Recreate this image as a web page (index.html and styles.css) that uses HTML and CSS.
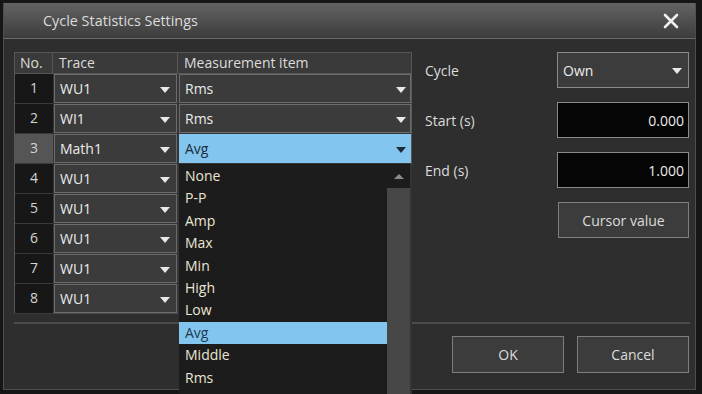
FILE: index.html
```html
<!DOCTYPE html>
<html>
<head>
<meta charset="utf-8">
<link rel="stylesheet" href="styles.css">
</head>
<body>
<div class="dialog">
  <div class="titlebar">
    <span class="title">Cycle Statistics Settings</span>
    <svg class="close" width="16" height="16" viewBox="0 0 16 16"><path d="M2 2 L14 14 M14 2 L2 14" stroke="#f0f0f0" stroke-width="2.6" stroke-linecap="round"/></svg>
  </div>
  <div class="content">
    <div class="main">
      <div class="table">
        <div class="hcell c-no">No.</div>
        <div class="hcell">Trace</div>
        <div class="hcell last">Measurement item</div>

        <div class="no">1</div>
        <div class="sel"><span>WU1</span><i class="arr"></i></div>
        <div class="sel wide"><span>Rms</span><i class="arr"></i></div>

        <div class="no">2</div>
        <div class="sel"><span>WI1</span><i class="arr"></i></div>
        <div class="sel wide"><span>Rms</span><i class="arr"></i></div>

        <div class="no cur">3</div>
        <div class="sel"><span>Math1</span><i class="arr"></i></div>
        <div class="sel wide open"><span>Avg</span><i class="arr dark"></i>
          <div class="list">
            <div class="items">
              <div class="item">None</div>
              <div class="item">P-P</div>
              <div class="item">Amp</div>
              <div class="item">Max</div>
              <div class="item">Min</div>
              <div class="item">High</div>
              <div class="item">Low</div>
              <div class="item hi">Avg</div>
              <div class="item">Middle</div>
              <div class="item">Rms</div>
            </div>
            <div class="scroll">
              <div class="up"><i class="uparr"></i></div>
              <div class="thumb"></div>
            </div>
          </div>
        </div>

        <div class="no">4</div>
        <div class="sel"><span>WU1</span><i class="arr"></i></div>
        <div class="empty"></div>

        <div class="no">5</div>
        <div class="sel"><span>WU1</span><i class="arr"></i></div>
        <div class="empty"></div>

        <div class="no">6</div>
        <div class="sel"><span>WU1</span><i class="arr"></i></div>
        <div class="empty"></div>

        <div class="no">7</div>
        <div class="sel"><span>WU1</span><i class="arr"></i></div>
        <div class="empty"></div>

        <div class="no">8</div>
        <div class="sel"><span>WU1</span><i class="arr"></i></div>
        <div class="empty"></div>
      </div>
      <div class="side">
        <div class="frow"><span class="lbl">Cycle</span><div class="combo"><span>Own</span><i class="arr"></i></div></div>
        <div class="frow"><span class="lbl">Start (s)</span><div class="num">0.000</div></div>
        <div class="frow"><span class="lbl">End (s)</span><div class="num">1.000</div></div>
        <div class="frow"><span class="lbl"></span><div class="btn">Cursor value</div></div>
      </div>
    </div>
    <div class="sep"></div>
    <div class="footer">
      <div class="btn fb">OK</div>
      <div class="btn fb">Cancel</div>
    </div>
  </div>
</div>
</body>
</html>
```
FILE: styles.css
```css
* { box-sizing: border-box; }
html, body { margin: 0; padding: 0; }
body {
  width: 702px; height: 394px; overflow: hidden;
  background: #161616;
  font-family: "Open Sans", "Noto Sans", sans-serif;
  font-size: 14px;
  color: #dedede;
}
.dialog {
  margin: 3px 0 0 3px;
  width: 693px; height: 387px;
  background: #2e2e2e;
  border: 1px solid #4e4e4e;
  border-top: none;
  display: flex; flex-direction: column;
}
.titlebar {
  height: 36px;
  background: linear-gradient(#636363, #3c3c3c);
  border-bottom: 1px solid #6c6c6c;
  display: flex; align-items: center; justify-content: space-between;
  padding: 0 16px 0 39px;
}
.title { font-size: 14.4px; color: #dcdcdc; padding-bottom: 1px; }
.close { margin-top: 1px; }
.content { flex: 1; padding: 13px 6px 0 10px; display: flex; flex-direction: column; }
.main { display: flex; height: 262px; }
.table {
  width: 398px; height: 262px;
  display: grid;
  grid-template-columns: 38px 125px 233px;
  grid-template-rows: 21px repeat(8, 30px);
  border: 1px solid #575757;
  border-bottom: 2px solid #484848;
  background: #363636;
}
.hcell {
  background: #3a3a3a;
  border-right: 1px solid #575757;
  border-bottom: 1px solid #575757;
  padding-left: 6px;
  line-height: 19px;
  color: #dcdcdc;
}
.hcell.c-no { padding-left: 5px; }
.hcell.last { border-right: none; }
.no {
  background: #171717;
  border-bottom: 1px solid #3a3a3a;
  text-align: center;
  line-height: 28px;
  color: #d4d4d4;
}
.no.cur { background: #555555; }
.sel {
  position: relative;
  margin: 0 1px 1px 1px;
  height: 29px;
  border: 1px solid #6c6c6c;
  background: #3b3b3b;
  display: flex; align-items: center; justify-content: space-between;
  padding: 0 6px 0 5px;
  color: #ececec;
}
.sel.wide { margin-left: 1px; margin-right: 0; padding-right: 4px; }
.sel.open { background: #82c5ef; border-color: #82c5ef; color: #1b2a38; }
.empty { background: #363636; }
.arr {
  display: block; width: 0; height: 0;
  border-left: 5px solid transparent;
  border-right: 5px solid transparent;
  border-top: 6px solid #e8e8e8;
  margin-top: 2px;
}
.arr.dark { border-top-color: #1e2a36; }
.list {
  position: absolute;
  left: -1px; top: 29px;
  width: 233px; height: 240px;
  background: #1c1c1c;
  display: flex;
  z-index: 5;
}
.items { width: 208px; padding-top: 1px; }
.item {
  height: 22.4px; line-height: 22px;
  padding-left: 6px;
  color: #ebe5d4;
}
.item.hi { background: #82c5ef; color: #1e3a52; }
.scroll { width: 25px; display: flex; flex-direction: column; border-right: 2px solid #333; }
.up { height: 24px; display: flex; justify-content: center; align-items: center; }
.uparr {
  display: block; width: 0; height: 0;
  border-left: 5px solid transparent;
  border-right: 5px solid transparent;
  border-bottom: 5px solid #8a8a8a;
}
.thumb { flex: 1; background: #474747; }
.side { flex: 1; padding-left: 13px; display: flex; flex-direction: column; gap: 14px; }
.frow { display: flex; align-items: center; justify-content: space-between; height: 36px; }
.lbl { color: #dcdcdc; }
.combo {
  width: 132px; height: 36px;
  border: 1px solid #8a8a8a;
  background: #3c3c3c;
  display: flex; align-items: center; justify-content: space-between;
  padding: 0 6px 0 5px;
  color: #ececec;
}
.num {
  width: 132px; height: 36px;
  border: 1px solid #8a8a8a;
  background: #050505;
  display: flex; align-items: center; justify-content: flex-end;
  padding-right: 4px;
  color: #ececec;
}
.btn {
  width: 131px; height: 36px;
  border: 1px solid #7e7e7e;
  background: #3c3c3c;
  display: flex; align-items: center; justify-content: center;
  color: #dcdcdc;
}
.sep { height: 2px; background: #4c4c4c; margin: 8px 0 0 0; width: 676px; }
.footer { display: flex; justify-content: flex-end; gap: 13px; padding: 12px 1px 0 0; width: 676px; }
.btn.fb { width: 112px; height: 37px; }
```
